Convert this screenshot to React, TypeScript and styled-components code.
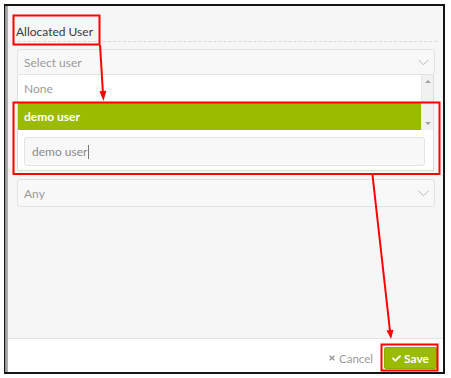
import React from "react";
import styled, { createGlobalStyle } from "styled-components";
import { FaCheck, FaTimes } from "react-icons/fa";

const GlobalStyle = createGlobalStyle`
  html, body {
    margin: 0;
    padding: 0;
    background: #fff;
  }
  body {
    font-family: Lato, "Open Sans", sans-serif;
  }
  * {
    box-sizing: border-box;
  }
`;

const Page = styled.div`
  position: relative;
  width: 451px;
  height: 378px;
  padding: 4px 0 0 4px;
`;

const Frame = styled.div`
  width: 441px;
  height: 370px;
  border: 2px solid #151515;
  border-left-width: 1px;
  display: flex;
`;

const EdgeStrip = styled.div`
  width: 3px;
  background: linear-gradient(90deg, #8c8c8c, #b8b8b8);
`;

const Modal = styled.div`
  flex: 1;
  display: flex;
  flex-direction: column;
  background: #f6f6f6;
`;

const Body = styled.div`
  flex: 1;
  padding: 0 6px 0 5px;
`;

const LabelRow = styled.div`
  padding: 18px 0 1px 3px;
  border-bottom: 1px dashed #d8d8d8;
  font-size: 12px;
  line-height: 16px;
  color: #3a3a3a;
`;

const SelectBox = styled.div<{ $gap: number; $height: number }>`
  margin: ${(p) => p.$gap}px 2px 0 4px;
  height: ${(p) => p.$height}px;
  border: 1px solid #e2e2e2;
  border-radius: 3px;
  background: #f8f8f8;
  display: flex;
  align-items: center;
  justify-content: space-between;
  padding: 0 5px 0 6px;
  font-size: 12px;
  color: #9a9a9a;
`;

const Dropdown = styled.div`
  margin: 0 3px 0 4px;
  border: 1px solid #dcdcdc;
  border-top: none;
  background: #fff;
`;

const ListRow = styled.div`
  display: flex;
`;

const Options = styled.div`
  flex: 1;
`;

const Option = styled.div<{ $active?: boolean; $height: number }>`
  height: ${(p) => p.$height}px;
  display: flex;
  align-items: center;
  padding-left: 6px;
  font-size: 12px;
  font-weight: ${(p) => (p.$active ? 700 : 400)};
  color: ${(p) => (p.$active ? "#fff" : "#9a9a9a")};
  background: ${(p) => (p.$active ? "#99bb00" : "#fff")};
`;

const ScrollBar = styled.div`
  width: 12px;
  background: #f1f1f1;
  border-left: 1px solid #e8e8e8;
  display: flex;
  flex-direction: column;
  justify-content: space-between;
  align-items: center;
  padding: 5px 0 5px;
`;

const ScrollArrow = styled.div<{ $up?: boolean }>`
  width: 0;
  height: 0;
  border-left: 3px solid transparent;
  border-right: 3px solid transparent;
  ${(p) =>
    p.$up ? "border-bottom: 3px solid #a3a3a3;" : "border-top: 3px solid #a3a3a3;"}
`;

const SearchArea = styled.div`
  padding: 7px 8px 4px 6px;
`;

const SearchBox = styled.div`
  height: 29px;
  border: 1px solid #e4e4e4;
  border-radius: 3px;
  background: #f8f8f8;
  display: flex;
  align-items: center;
  padding-left: 7px;
  font-size: 12px;
  color: #8a8a8a;
`;

const Caret = styled.span`
  display: inline-block;
  width: 1px;
  height: 14px;
  margin-left: 1px;
  background: #777;
`;

const Footer = styled.div`
  height: 34px;
  border-top: 1px solid #e3e3e3;
  background: #fff;
  display: flex;
  justify-content: flex-end;
  align-items: center;
  gap: 11px;
  padding: 8px 6px 3px 0;
`;

const CancelButton = styled.div`
  display: flex;
  align-items: center;
  gap: 3px;
  font-size: 11.5px;
  color: #9b9b9b;
  svg {
    width: 8px;
    height: 8px;
  }
`;

const SaveButton = styled.div`
  width: 53px;
  height: 22px;
  background: #99bb00;
  border: 1px solid #8aab00;
  border-radius: 2px;
  display: flex;
  align-items: center;
  justify-content: center;
  gap: 3px;
  color: #fff;
  font-size: 12px;
  font-weight: 700;
  svg {
    width: 9px;
    height: 9px;
  }
`;

const Annotations = styled.svg`
  position: absolute;
  left: 0;
  top: 0;
  pointer-events: none;
`;

const Chevron = () => (
  <svg width="11" height="7" viewBox="0 0 11 7">
    <polyline points="0.5,0.8 5.5,5.8 10.5,0.8" fill="none" stroke="#b9b9b9" strokeWidth="1" />
  </svg>
);

export default function App() {
  return (
    <>
      <GlobalStyle />
      <Page>
        <Frame>
          <EdgeStrip />
          <Modal>
            <Body>
              <LabelRow>Allocated User</LabelRow>
              <SelectBox $gap={7} $height={26}>
                Select user
                <Chevron />
              </SelectBox>
              <Dropdown>
                <ListRow>
                  <Options>
                    <Option $height={27}>None</Option>
                    <Option $height={28} $active>
                      demo user
                    </Option>
                  </Options>
                  <ScrollBar>
                    <ScrollArrow $up />
                    <ScrollArrow />
                  </ScrollBar>
                </ListRow>
                <SearchArea>
                  <SearchBox>
                    demo user
                    <Caret />
                  </SearchBox>
                </SearchArea>
              </Dropdown>
              <SelectBox $gap={8} $height={28}>
                Any
                <Chevron />
              </SelectBox>
            </Body>
            <Footer>
              <CancelButton>
                <FaTimes />
                Cancel
              </CancelButton>
              <SaveButton>
                <FaCheck />
                Save
              </SaveButton>
            </Footer>
          </Modal>
        </Frame>
        <Annotations width="451" height="378" viewBox="0 0 451 378">
          <g fill="none" stroke="#ff0000" strokeWidth="2">
            <rect x="13.5" y="15.5" width="86" height="29" />
            <rect x="13.5" y="102.5" width="426" height="71.5" />
            <rect x="381.5" y="344.5" width="56" height="26" />
            <line x1="100" y1="45" x2="102.9" y2="92" />
            <line x1="372.5" y1="175" x2="390" y2="331" />
          </g>
          <g fill="#ff0000">
            <polygon points="103.5,101 106.4,90.8 99.4,91.2" />
            <polygon points="391,339 393.5,329.7 386.5,330.5" />
          </g>
        </Annotations>
      </Page>
    </>
  );
}
